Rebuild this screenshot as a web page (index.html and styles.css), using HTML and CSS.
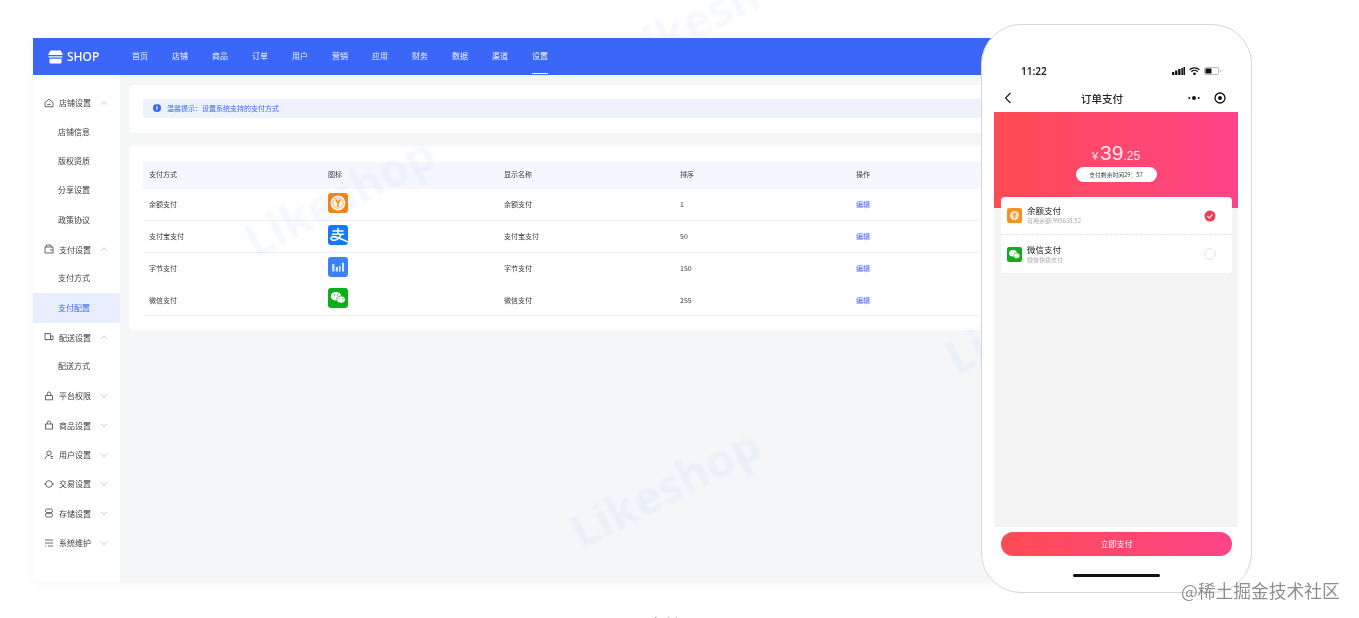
FILE: index.html
```html
<!DOCTYPE html>
<html lang="en">

<head>
    <meta charset="UTF-8">
    <meta name="viewport" content="width=device-width, initial-scale=1.0">
    <title>支付配置</title>
    <link rel="stylesheet" href="styles.css">
</head>

<body>

    <div class="app">
        <header class="topbar">
            <div class="logo">
                <svg width="15" height="14" viewBox="0 0 15 14">
                    <path d="M2.5 0.5h10l2 3.5v1h-14v-1z" fill="#fff" />
                    <path d="M0.5 6.300h14v1.200h-14z" fill="#fff" />
                    <path d="M1.500 8.800h12v3.700a1 1 0 0 1-1 1h-10a1 1 0 0 1-1-1z" fill="#fff" />
                </svg>
                <span>SHOP</span>
            </div>
            <nav class="nav">
                <a class="nav-item">首页</a>
                <a class="nav-item">店铺</a>
                <a class="nav-item">商品</a>
                <a class="nav-item">订单</a>
                <a class="nav-item">用户</a>
                <a class="nav-item">营销</a>
                <a class="nav-item">应用</a>
                <a class="nav-item">财务</a>
                <a class="nav-item">数据</a>
                <a class="nav-item">渠道</a>
                <a class="nav-item active">设置</a>
            </nav>
        </header>

        <div class="layout">
            <aside class="sidebar">
                <div class="side-group">
                    <svg class="side-icon" viewBox="0 0 10 10"><path d="M1 4.500 5 1.200l4 3.300v4.300H1zM3.200 6.600h3.600" /></svg>
                    <span>店铺设置</span>
                    <svg class="chevron" viewBox="0 0 8 8"><path d="M1 5.500 4 2.800l3 2.700" /></svg>
                </div>
                <div class="side-sub">店铺信息</div>
                <div class="side-sub">版权资质</div>
                <div class="side-sub">分享设置</div>
                <div class="side-sub">政策协议</div>
                <div class="side-group">
                    <svg class="side-icon" viewBox="0 0 10 10"><path d="M1 3h8v6H1zM2 3l.6-2h4.200l.6 2M6 6h3" /></svg>
                    <span>支付设置</span>
                    <svg class="chevron" viewBox="0 0 8 8"><path d="M1 5.500 4 2.800l3 2.700" /></svg>
                </div>
                <div class="side-sub">支付方式</div>
                <div class="side-sub current">支付配置</div>
                <div class="side-group">
                    <svg class="side-icon" viewBox="0 0 10 10"><path d="M1 1.500h5.500v6H1zM6.500 4H9v3.500H6.500M2.500 8.800h.6M7.200 8.800h.6" /></svg>
                    <span>配送设置</span>
                    <svg class="chevron" viewBox="0 0 8 8"><path d="M1 5.500 4 2.800l3 2.700" /></svg>
                </div>
                <div class="side-sub">配送方式</div>
                <div class="side-group">
                    <svg class="side-icon" viewBox="0 0 10 10"><path d="M1.500 4.500h7v4.300h-7zM3.200 4.500V2.800a1.800 1.800 0 0 1 3.600 0v1.700" /></svg>
                    <span>平台权限</span>
                    <svg class="chevron" viewBox="0 0 8 8"><path d="M1 2.800 4 5.500l3-2.700" /></svg>
                </div>
                <div class="side-group">
                    <svg class="side-icon" viewBox="0 0 10 10"><path d="M1.500 4h7v5h-7zM3.300 4V2.600a1.700 1.700 0 0 1 3.400 0V4" /></svg>
                    <span>商品设置</span>
                    <svg class="chevron" viewBox="0 0 8 8"><path d="M1 2.800 4 5.500l3-2.700" /></svg>
                </div>
                <div class="side-group">
                    <svg class="side-icon" viewBox="0 0 10 10"><circle cx="5" cy="3.200" r="2.200" /><path d="M1 9c.3-2 1.600-3.400 4-3.600M6.500 6.500h2.500M6.500 8.300h2.500" /></svg>
                    <span>用户设置</span>
                    <svg class="chevron" viewBox="0 0 8 8"><path d="M1 2.800 4 5.500l3-2.700" /></svg>
                </div>
                <div class="side-group">
                    <svg class="side-icon" viewBox="0 0 10 10"><circle cx="5" cy="5" r="3.300" /><path d="M1 4v2M9 4v2" /></svg>
                    <span>交易设置</span>
                    <svg class="chevron" viewBox="0 0 8 8"><path d="M1 2.800 4 5.500l3-2.700" /></svg>
                </div>
                <div class="side-group">
                    <svg class="side-icon" viewBox="0 0 10 10"><rect x="1.500" y="1" width="7" height="3.600" rx="1.600" /><rect x="1.500" y="5.400" width="7" height="3.600" rx="1.600" /></svg>
                    <span>存储设置</span>
                    <svg class="chevron" viewBox="0 0 8 8"><path d="M1 2.800 4 5.500l3-2.700" /></svg>
                </div>
                <div class="side-group">
                    <svg class="side-icon" viewBox="0 0 10 10"><path d="M1 2h8M1 5h8M4 8h5M1 8h1.200" /></svg>
                    <span>系统维护</span>
                    <svg class="chevron" viewBox="0 0 8 8"><path d="M1 2.800 4 5.500l3-2.700" /></svg>
                </div>
            </aside>

            <main class="content">
                <section class="card card-tip">
                    <div class="tip">
                        <span class="tip-icon">i</span>
                        <span>温馨提示：设置系统支持的支付方式</span>
                    </div>
                </section>

                <section class="card card-table">
                    <div class="table-row table-head">
                        <div>支付方式</div>
                        <div>图标</div>
                        <div>显示名称</div>
                        <div>排序</div>
                        <div>操作</div>
                    </div>
                    <div class="table-row">
                        <div>余额支付</div>
                        <div>
                            <svg class="pay-icon" viewBox="0 0 20 20">
                                <rect width="20" height="20" rx="3" fill="#f5851a" />
                                <circle cx="10" cy="10" r="7.400" fill="#fff" />
                                <circle cx="10" cy="10" r="5.800" fill="#fbb46f" />
                                <circle cx="10" cy="10" r="4.800" fill="#fff3e3" />
                                <path d="M7.800 6.600 10 10l2.200-3.400M10 10v4" fill="none" stroke="#f5851a" stroke-width="1.500" />
                            </svg>
                        </div>
                        <div>余额支付</div>
                        <div>1</div>
                        <div><a class="link">编辑</a></div>
                    </div>
                    <div class="table-row">
                        <div>支付宝支付</div>
                        <div>
                            <svg class="pay-icon" viewBox="0 0 20 20">
                                <rect width="20" height="20" rx="3" fill="#1677ff" />
                                <path d="M4.500 6h11M10 2.800V9M3.800 9.300h12.400" fill="none" stroke="#fff" stroke-width="1.500" />
                                <path d="M13.200 9.500C11.500 13.500 7.800 15.800 4.800 15.200 2.200 14.600 2.500 11.800 5.400 11.600 9 11.400 13.500 14.500 20 17" fill="none" stroke="#fff" stroke-width="1.600" />
                            </svg>
                        </div>
                        <div>支付宝支付</div>
                        <div>50</div>
                        <div><a class="link">编辑</a></div>
                    </div>
                    <div class="table-row no-line">
                        <div>字节支付</div>
                        <div>
                            <svg class="pay-icon" viewBox="0 0 20 20">
                                <rect width="20" height="20" rx="3" fill="#3b82f6" />
                                <path d="M4.200 7h2.200v7.400H4.200zM7.800 10h2.200v4.400H7.800zM11 9h1.600v5.400H11zM14 5.800h2v8.600h-2z" fill="#dbe9ff" />
                            </svg>
                        </div>
                        <div>字节支付</div>
                        <div>150</div>
                        <div><a class="link">编辑</a></div>
                    </div>
                    <div class="table-row">
                        <div>微信支付</div>
                        <div>
                            <svg class="pay-icon" viewBox="0 0 20 20">
                                <rect width="20" height="20" rx="3" fill="#0dae1b" />
                                <ellipse cx="8" cy="8.200" rx="5.200" ry="4.300" fill="#fff" />
                                <ellipse cx="13" cy="11.600" rx="4.200" ry="3.500" fill="#fff" stroke="#0dae1b" stroke-width=".7" />
                                <circle cx="6.300" cy="7" r=".7" fill="#0dae1b" />
                                <circle cx="9.600" cy="7" r=".7" fill="#0dae1b" />
                                <circle cx="11.600" cy="10.800" r=".55" fill="#0dae1b" />
                                <circle cx="14.400" cy="10.800" r=".55" fill="#0dae1b" />
                            </svg>
                        </div>
                        <div>微信支付</div>
                        <div>255</div>
                        <div><a class="link">编辑</a></div>
                    </div>
                </section>
            </main>
        </div>
    </div>

    <div class="caption">支付配置</div>

    <!-- watermarks lie over the page -->
    <div class="mark mark-top">Likeshop</div>
    <div class="mark mark-table">Likeshop</div>
    <div class="mark mark-right">Likeshop</div>
    <div class="mark mark-bottom">Likeshop</div>

    <div class="phone">
        <div class="status">
            <span class="time">11:22</span>
            <div class="status-icons">
                <svg width="13" height="8" viewBox="0 0 13 8" fill="#111">
                    <path d="M0 5h2.300v3H0zM3.100 3.500h2.300V8H3.100zM6.200 2h2.300v6H6.200zM9.300 1h1.600v7H9.300zM11.400 0H13v8h-1.600z" />
                </svg>
                <svg width="11" height="8" viewBox="0 0 11 8" fill="none" stroke="#111" stroke-width="1.300">
                    <path d="M.6 2.800a7 7 0 0 1 9.800 0M2.400 4.700a4.400 4.400 0 0 1 6.200 0" />
                    <circle cx="5.500" cy="6.800" r=".7" fill="#111" />
                </svg>
                <svg width="18" height="8" viewBox="0 0 18 8">
                    <rect x=".5" y=".5" width="14" height="7" rx="1.500" fill="#fff" stroke="#bbb" />
                    <rect x="1.500" y="1.500" width="6" height="5" fill="#111" />
                    <rect x="16" y="3" width="1" height="2" fill="#bbb" />
                </svg>
            </div>
        </div>
        <div class="phone-nav">
            <svg class="back" width="8" height="12" viewBox="0 0 8 12"><path d="M6.500 1 1.500 6l5 5" /></svg>
            <span class="phone-title">订单支付</span>
            <svg width="12" height="4" viewBox="0 0 12 4" fill="#111">
                <circle cx="1.300" cy="2" r="1" />
                <circle cx="6" cy="2" r="2" />
                <circle cx="10.700" cy="2" r="1" />
            </svg>
            <svg class="target" width="12" height="12" viewBox="0 0 12 12">
                <circle cx="6" cy="6" r="5" fill="none" stroke="#111" stroke-width="1.300" />
                <circle cx="6" cy="6" r="2" fill="#111" />
            </svg>
        </div>
        <div class="screen">
            <div class="hero">
                <div class="price">
                    <span class="yen">¥</span><span class="whole">39</span><span class="cents">.25</span>
                </div>
                <div class="countdown">支付剩余时间29：57</div>
            </div>
            <div class="methods">
                <div class="method">
                    <svg class="method-icon" viewBox="0 0 20 20">
                        <rect width="20" height="20" rx="3" fill="#f5931f" />
                        <circle cx="10" cy="10" r="6" fill="#fde3c6" />
                        <path d="M7.800 7 10 10l2.200-3M10 10v3.500" fill="none" stroke="#f5851f" stroke-width="1.400" />
                    </svg>
                    <div class="method-text">
                        <div class="method-name">余额支付</div>
                        <div class="method-note">可用余额:995638.52</div>
                    </div>
                    <svg class="radio" viewBox="0 0 12 12">
                        <circle cx="6" cy="6" r="5.500" fill="#ef3f50" />
                        <path d="M3.300 6.100 5.200 8l3.500-3.700" fill="none" stroke="#fff" stroke-width="1.100" />
                    </svg>
                </div>
                <div class="method">
                    <svg class="method-icon" viewBox="0 0 20 20">
                        <rect width="20" height="20" rx="3" fill="#0dae1b" />
                        <ellipse cx="8" cy="8.200" rx="5.200" ry="4.300" fill="#fff" />
                        <ellipse cx="13" cy="11.600" rx="4.200" ry="3.500" fill="#fff" stroke="#0dae1b" stroke-width=".7" />
                    </svg>
                    <div class="method-text">
                        <div class="method-name">微信支付</div>
                        <div class="method-note">微信快捷支付</div>
                    </div>
                    <svg class="radio" viewBox="0 0 12 12">
                        <circle cx="6" cy="6" r="5.300" fill="#fff" stroke="#d9d9d9" stroke-width=".8" />
                    </svg>
                </div>
            </div>
        </div>
        <div class="pay-btn">立即支付</div>
        <div class="home-bar"></div>
    </div>

    <div class="credit">@稀土掘金技术社区</div>

</body>

</html>
```

FILE: styles.css
```css
html,
body {
    height: 618px;
    overflow: hidden;
}

body {
    margin: 0;
    padding: 38px 0 0 33px;
    box-sizing: border-box;
    position: relative;
    background: #fff;
    font-family: "Noto Sans CJK SC", "Noto Sans", sans-serif;
    color: #333;
}

/* the source picture is a soft upscale */
.app,
.phone,
.credit {
    filter: blur(0.35px);
}

.app {
    width: 1100px;
    height: 544px;
    display: flex;
    flex-direction: column;
    box-shadow: 0 2px 10px rgba(0, 0, 0, 0.04);
}

.topbar {
    height: 37px;
    flex: none;
    background: #3a67f8;
    color: #fff;
    display: flex;
    align-items: center;
}

.logo {
    width: 99px;
    padding-left: 15px;
    box-sizing: border-box;
    display: flex;
    align-items: center;
    gap: 4px;
    font-family: "Noto Sans", sans-serif;
    font-size: 12px;
    font-weight: 500;
}

.nav {
    display: flex;
    gap: 24px;
    height: 100%;
}

.nav-item {
    font-size: 8px;
    line-height: 35px;
    width: 16px;
    white-space: nowrap;
    color: #f2f5ff;
}

.nav-item.active {
    border-bottom: 1px solid #fff;
    height: 35px;
}

.layout {
    flex: 1;
    display: flex;
    min-height: 0;
    background: #f4f6f8;
}

.sidebar {
    width: 87px;
    flex: none;
    padding-top: 13px;
    box-sizing: border-box;
    background: #fff;
    font-size: 8px;
    color: #3c3c3c;
}

.side-group,
.side-sub {
    height: 29.33px;
    box-sizing: border-box;
    display: flex;
    align-items: center;
    white-space: nowrap;
}

.side-group {
    padding-left: 11px;
    gap: 5px;
}

.side-sub {
    padding-left: 25px;
    padding-bottom: 1.500px;
}

.side-sub.current {
    background: #e9eefe;
    color: #3a67f8;
}

.side-icon {
    width: 10px;
    height: 10px;
    fill: none;
    stroke: #444;
    stroke-width: 0.8;
}

.chevron {
    width: 8px;
    height: 8px;
    margin-left: 4px;
    fill: none;
    stroke: #aaa;
    stroke-width: 0.7;
}

.content {
    flex: 1;
    padding: 10px 0 0 9px;
    display: flex;
    flex-direction: column;
    gap: 13px;
}

.card {
    background: #fff;
    border-radius: 4px;
    padding: 14px;
}

.card-tip {
    height: 48px;
    box-sizing: border-box;
}

.tip {
    height: 19px;
    box-sizing: border-box;
    padding: 0 0 1px 10px;
    background: #eef2fe;
    border-radius: 3px;
    display: flex;
    align-items: center;
    gap: 6px;
    font-size: 7px;
    color: #3a67f8;
}

.tip-icon {
    width: 8px;
    height: 8px;
    border-radius: 50%;
    background: #3a67f8;
    color: #fff;
    font-size: 6px;
    font-weight: 700;
    line-height: 8px;
    text-align: center;
}

.card-table {
    padding: 16px 14px 14px;
    height: 184px;
    box-sizing: border-box;
}

.table-row {
    display: grid;
    grid-template-columns: 179px 176px 176px 176px 1fr;
    height: 31.750px;
    align-items: center;
    border-bottom: 1px solid #eff1f4;
    box-sizing: border-box;
    font-size: 7px;
    color: #3c3c3c;
}

.table-row > div {
    padding-left: 6px;
    display: flex;
    align-items: center;
}

.table-row.no-line {
    border-bottom: none;
}

.table-head {
    height: 27px;
    padding-bottom: 3px;
    background: #f5f7fe;
    border-bottom: none;
}

.pay-icon {
    width: 20px;
    height: 20px;
    margin-bottom: 3px;
}

.link {
    color: #3a67f8;
}

.caption {
    margin-top: 32px;
    width: 1293px;
    text-align: center;
    font-size: 16px;
    line-height: 20px;
    color: #555;
}

.mark {
    position: absolute;
    font-family: "Noto Sans", sans-serif;
    font-size: 46px;
    font-weight: 700;
    line-height: 60px;
    color: #3a67f8;
    opacity: 0.045;
    transform: rotate(-27deg);
    filter: blur(1px);
    pointer-events: none;
}

.mark-top {
    left: 612px;
    top: -20px;
}

.mark-table {
    left: 236px;
    top: 166px;
}

.mark-right {
    left: 937px;
    top: 283px;
}

.mark-bottom {
    left: 562px;
    top: 457px;
}

.phone {
    position: absolute;
    left: 981px;
    top: 24px;
    width: 271px;
    height: 569px;
    box-sizing: border-box;
    padding: 0 13px 0 12px;
    background: #fff;
    border: 1px solid #d6d6d6;
    border-radius: 40px;
    display: flex;
    flex-direction: column;
}

.status {
    height: 34px;
    margin-top: 29px;
    padding: 0 16px 0 27px;
    display: flex;
    align-items: center;
    justify-content: space-between;
    flex: none;
}

.time {
    font-family: "Noto Sans", sans-serif;
    font-size: 10px;
    font-weight: 600;
    color: #222;
}

.status-icons {
    display: flex;
    align-items: center;
    gap: 4px;
}

.phone-nav {
    height: 20px;
    flex: none;
    display: flex;
    align-items: center;
    padding: 0 12px 0 10px;
    margin-bottom: 4px;
}

.back {
    fill: none;
    stroke: #222;
    stroke-width: 1.2;
}

.phone-title {
    flex: 1;
    font-size: 10.500px;
    font-weight: 500;
    color: #222;
    text-align: center;
    padding-left: 5px;
    padding-right: 1px;
}

.target {
    margin-left: 14px;
}

.screen {
    height: 415px;
    flex: none;
    background: #f4f4f5;
}

.hero {
    height: 96px;
    background: linear-gradient(90deg, #ff4b54, #fe4488);
    color: #fff;
    display: flex;
    flex-direction: column;
    align-items: center;
    padding-top: 26px;
    box-sizing: border-box;
}

.price {
    height: 29px;
    display: flex;
    align-items: baseline;
    font-family: "Liberation Sans", sans-serif;
    line-height: 29px;
    color: #ffe9ee;
}

.yen {
    font-size: 11px;
    margin-right: 2px;
}

.whole {
    font-size: 21px;
}

.cents {
    font-size: 12px;
}

.countdown {
    height: 15px;
    width: 81px;
    background: #fff;
    border-radius: 8px;
    color: #444;
    font-size: 5.800px;
    line-height: 15px;
    text-align: center;
}

.methods {
    margin: -11px 6px 0 7px;
    background: #fff;
    border-radius: 4px;
    position: relative;
}

.method {
    height: 38px;
    display: flex;
    align-items: center;
    padding: 0 16px 0 6px;
    border-bottom: 1px dashed #e4e4e4;
    box-sizing: border-box;
}

.method:last-child {
    border-bottom: none;
}

.method-icon {
    width: 15px;
    height: 15px;
    flex: none;
}

.method-text {
    flex: 1;
    padding-left: 5px;
}

.method-name {
    font-size: 8.500px;
    line-height: 11px;
    color: #222;
}

.method-note {
    font-size: 6px;
    line-height: 10px;
    color: #aaa;
}

.radio {
    width: 12px;
    height: 12px;
}

.pay-btn {
    height: 24px;
    margin: 5px 6px 0 7px;
    flex: none;
    border-radius: 12px;
    background: linear-gradient(90deg, #ff4b54, #fe4488);
    color: #fff;
    font-size: 8px;
    line-height: 24px;
    text-align: center;
}

.home-bar {
    width: 87px;
    height: 2.500px;
    margin: 18px auto 0;
    background: #111;
    border-radius: 2px;
    flex: none;
}

.credit {
    position: absolute;
    left: 1181px;
    top: 577px;
    font-size: 17.750px;
    line-height: 26px;
    color: #8f8f8f;
    white-space: nowrap;
}
```
